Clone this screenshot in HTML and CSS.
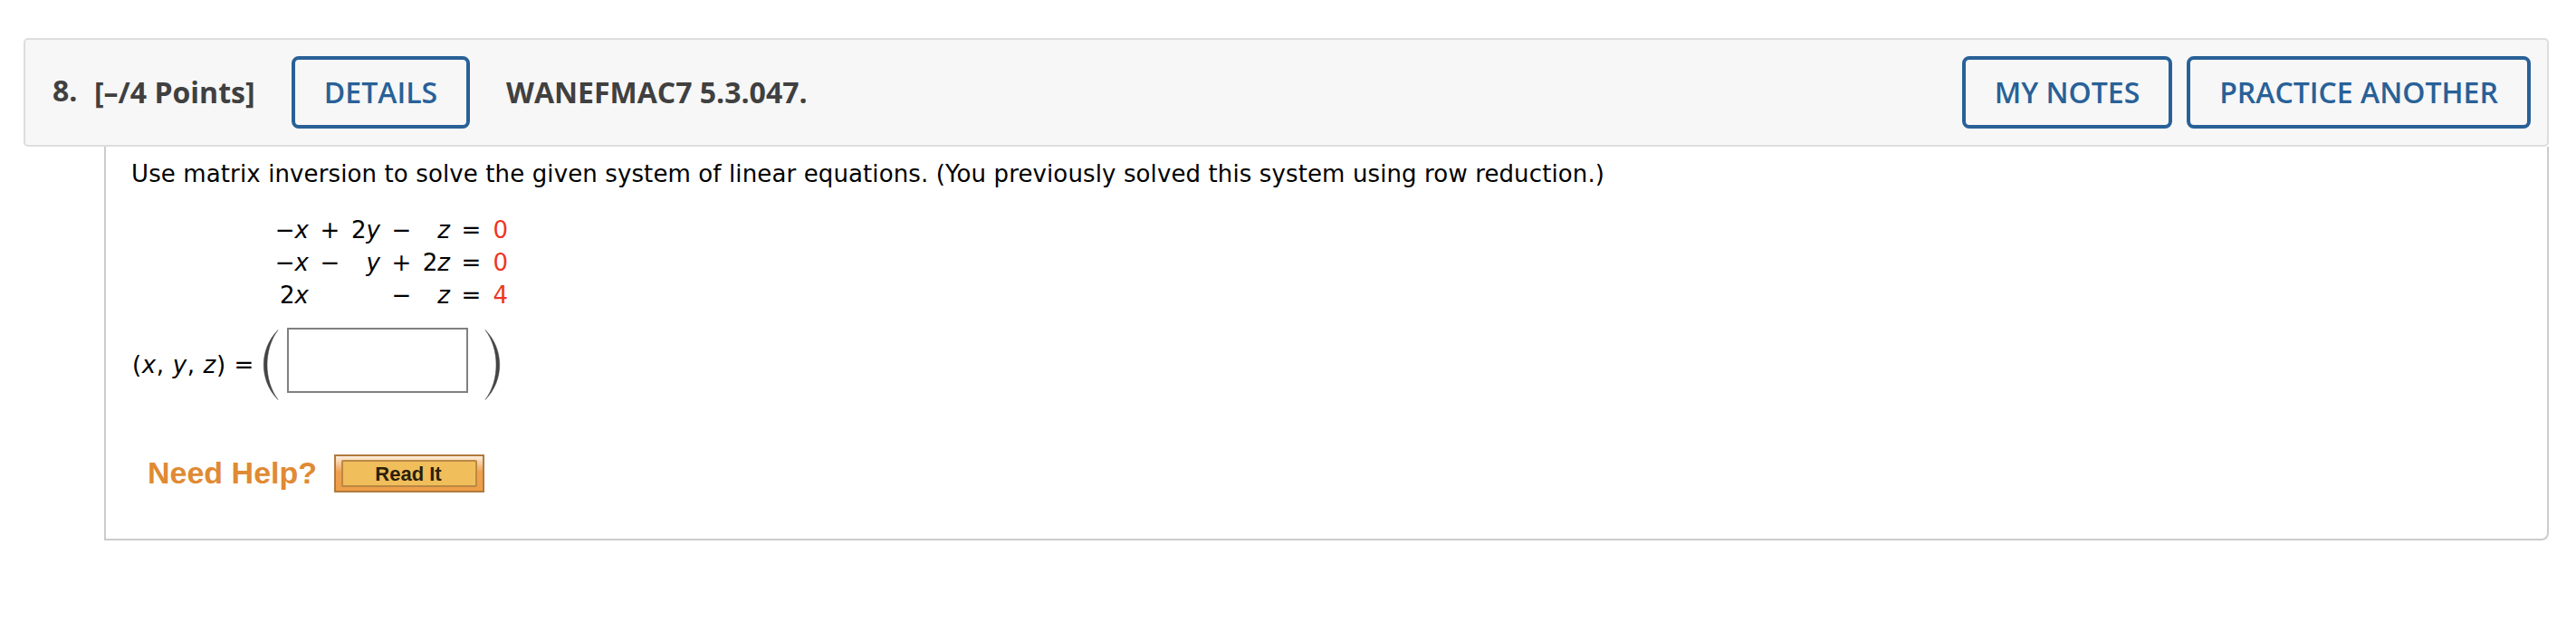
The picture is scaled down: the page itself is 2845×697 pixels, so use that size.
FILE: index.html
```html
<!DOCTYPE html>
<html lang="en">
<head>
    <meta charset="UTF-8">
    <meta name="viewport" content="width=device-width, initial-scale=1.0">
    <title>WANEFMAC7 5.3.047.</title>
    <link rel="stylesheet" href="styles.css">
</head>
<body>
    <div class="question">
        <div class="header">
            <span class="number">8.</span>
            <span class="points">[–/4 Points]</span>
            <button class="btn btn-details">DETAILS</button>
            <span class="name">WANEFMAC7 5.3.047.</span>
            <div class="actions">
                <button class="btn btn-notes">MY NOTES</button>
                <button class="btn btn-practice">PRACTICE ANOTHER</button>
            </div>
        </div>

        <div class="content">
            <p class="intro">Use matrix inversion to solve the given system of linear equations. (You previously solved this system using row reduction.)</p>

            <div class="system">
                <span>−<i>x</i></span><span class="op">+</span><span>2<i>y</i></span><span class="op">−</span><span><i>z</i></span><span class="op">=</span><span class="rand">0</span>
                <span>−<i>x</i></span><span class="op">−</span><span><i>y</i></span><span class="op">+</span><span>2<i>z</i></span><span class="op">=</span><span class="rand">0</span>
                <span>2<i>x</i></span><span></span><span></span><span class="op">−</span><span><i>z</i></span><span class="op">=</span><span class="rand">4</span>
            </div>

            <div class="answer">
                <label class="vars" for="answer">(<i>x</i>, <i>y</i>, <i>z</i>) =</label>
                <svg class="paren" width="18" height="78" viewBox="0 0 18 78">
                    <path d="M17 0.5C-4 22 -4 56 17 77.5C1 56 1 22 17 0.5Z"/>
                </svg>
                <input type="text" id="answer">
                <svg class="paren paren-right" width="18" height="78" viewBox="0 0 18 78">
                    <path d="M1 0.5C22 22 22 56 1 77.5C17 56 17 22 1 0.5Z"/>
                </svg>
            </div>

            <div class="help">
                <span class="help-label">Need Help?</span>
                <button class="read-it"><span>Read It</span></button>
            </div>
        </div>
    </div>
</body>
</html>
```
FILE: styles.css
```css
* {
    margin: 0;
    padding: 0;
    box-sizing: border-box;
}

body {
    background-color: #fff;
    color: #000;
    font-family: "DejaVu Sans", Verdana, sans-serif;
    font-size: 26px;
    line-height: 36px;
}

.question {
    margin: 42px 30px 0 26px;
}

.header {
    display: flex;
    align-items: center;
    height: 120px;
    padding: 0 18px 0 30px;
    border: 2px solid #ddd;
    border-radius: 5px;
    background-color: #f7f7f7;
    color: #404040;
    font-family: "Open Sans", sans-serif;
    font-size: 32px;
    font-weight: 700;
    white-space: nowrap;
}

.number {
    width: 46px;
    padding-bottom: 4px;
}

.points {
    width: 218px;
}

.btn {
    height: 80px;
    padding-bottom: 2px;
    border: 4px solid #286197;
    border-radius: 8px;
    background: transparent;
    color: #286197;
    font-family: inherit;
    font-size: 32px;
    font-weight: 600;
}

.btn-details {
    width: 197px;
    margin-right: 40px;
}

.actions {
    display: flex;
    gap: 16px;
    margin-left: auto;
}

.btn-notes {
    width: 232px;
}

.btn-practice {
    width: 380px;
}

.content {
    height: 435px;
    margin-left: 89px;
    padding: 12px 0 0 28px;
    border: 2px solid #ccc;
    border-top: none;
    border-bottom-right-radius: 8px;
}

.intro {
    margin-bottom: 26px;
    letter-spacing: 0.118px;
    white-space: nowrap;
}

/* one column per term, operators in between */
.system {
    display: grid;
    grid-template-columns: 47px 47px 32px 47px 30px 47px 17px;
    grid-auto-rows: 36px;
    margin: 0 0 18px 149px;
    text-align: right;
    white-space: nowrap;
}

.system > span {
    display: flex;
    justify-content: flex-end;
}

.system .op {
    justify-content: center;
}

.system .rand {
    color: #ee3524;
}

.answer {
    display: flex;
    height: 80px;
}

.vars {
    width: 144px;
    margin-left: 1px;
    padding-top: 23px;
    letter-spacing: 0.65px;
    white-space: nowrap;
}

.paren {
    margin-top: 2px;
    fill: #444;
    stroke: #444;
    stroke-width: 0.5;
}

.answer input {
    width: 200px;
    height: 72px;
    margin: 0 18px 0 9px;
    border: 2px solid #808080;
    font-size: 26px;
}

.help {
    display: flex;
    align-items: center;
    height: 42px;
    margin: 60px 0 0 18px;
    font-family: "Liberation Sans", Arial, sans-serif;
    font-weight: 700;
}

.help-label {
    width: 206px;
    padding-bottom: 3px;
    color: #e08a33;
    font-size: 34px;
}

.read-it {
    width: 166px;
    height: 42px;
    padding: 4px 6px;
    border: 2px solid #b07a3c;
    background: linear-gradient(#fdeedd, #f0a150 45%, #ee9d48);
    font: inherit;
}

.read-it span {
    display: block;
    height: 30px;
    padding-right: 2px;
    border: 2px solid #b98942;
    border-radius: 2px;
    background-color: #f1be5c;
    color: #2b2008;
    font-size: 22px;
    line-height: 28px;
}
```
